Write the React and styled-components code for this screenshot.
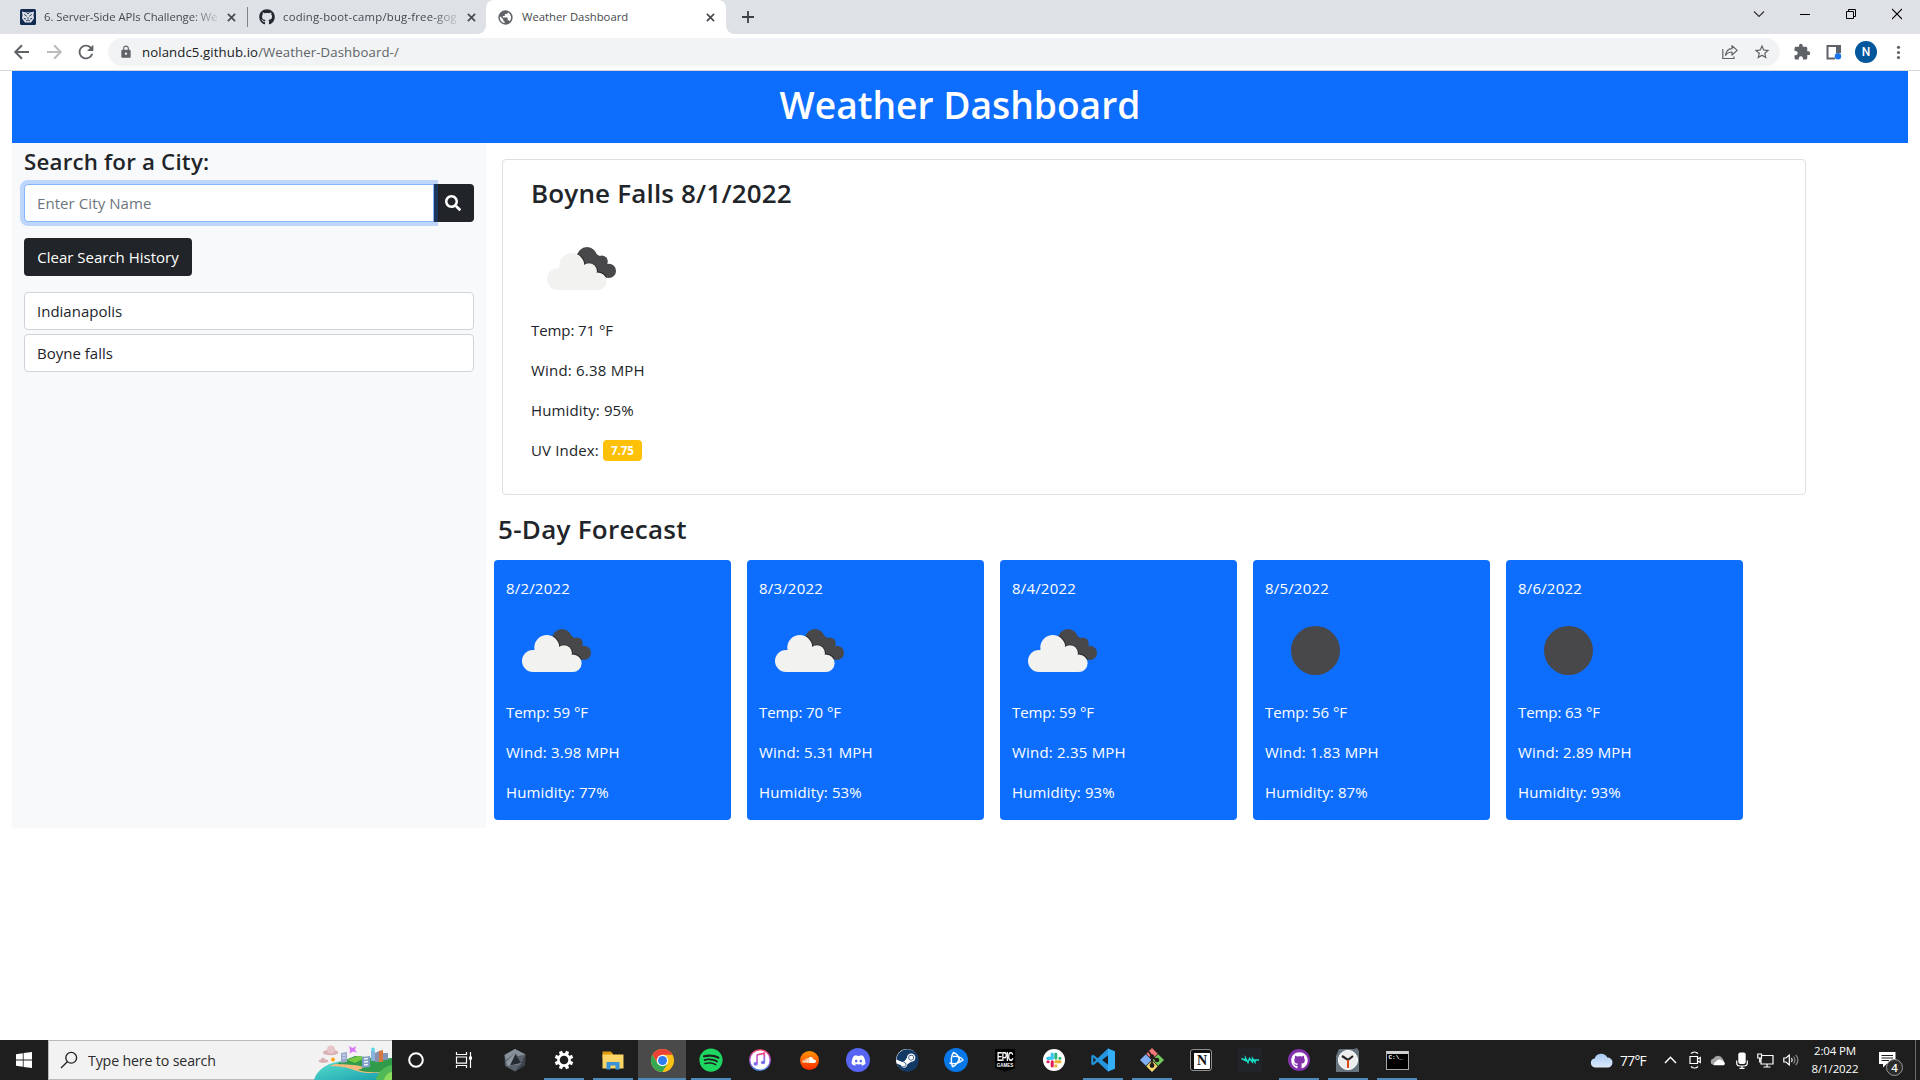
import React from "react";
import styled, { createGlobalStyle, css } from "styled-components";
import { FaSpotify, FaDiscord, FaGithub, FaSearch, FaSoundcloud, FaSteam } from "react-icons/fa";
import { MdExtension, MdLock, MdStarBorder, MdRefresh } from "react-icons/md";

const blue = "#0d6efd";
const dark = "#212529";

const GlobalStyle = createGlobalStyle`
  *, *::before, *::after { box-sizing: border-box; }
  body {
    margin: 0;
    overflow: hidden;
    background: #fff;
    color: ${dark};
    font-family: "Open Sans", "Noto Sans", sans-serif;
    font-size: 15px;
    line-height: 24px;
  }
  svg { display: block; flex: none; }
`;

const Screen = styled.div`
  display: flex;
  flex-direction: column;
  width: 1920px;
  height: 1080px;
`;

/* ---------- browser chrome ---------- */

const TabStrip = styled.div`
  display: flex;
  height: 34px;
  flex: none;
  background: #dee1e6;
`;

const Tab = styled.div`
  display: flex;
  align-items: center;
  position: relative;
  width: ${(p) => p.$width}px;
  padding-left: ${(p) => p.$pad}px;
  padding-right: ${(p) => p.$end}px;
  color: #45494d;
  ${(p) =>
    p.$active &&
    css`
      background: #fff;
      border-radius: 8px 8px 0 0;
      &::before, &::after {
        content: "";
        position: absolute;
        bottom: 0;
        width: 8px;
        height: 8px;
      }
      &::before { left: -8px; background: radial-gradient(circle at 0 0, transparent 7.5px, #fff 8px); }
      &::after { right: -8px; background: radial-gradient(circle at 100% 0, transparent 7.5px, #fff 8px); }
    `}
`;

const TabTitle = styled.span`
  flex: 1;
  margin-left: ${(p) => p.$gap || 8}px;
  margin-right: 7px;
  white-space: nowrap;
  font-size: 11.3px;
  letter-spacing: ${(p) => p.$spacing || 0}px;
  ${(p) => p.$fade && css`mask-image: linear-gradient(to right, #000 84%, transparent 101%);`}
`;

const TabDivider = styled.div`
  width: 1px;
  height: 20px;
  margin-top: 7px;
  background: #808387;
`;

const NewTab = styled.div`
  display: flex;
  align-items: center;
  margin-left: 16px;
`;

const WindowControls = styled.div`
  display: flex;
  margin-left: auto;
`;

const WindowButton = styled.div`
  display: flex;
  justify-content: center;
  width: 46px;
  padding-top: 8px;
`;

const Toolbar = styled.div`
  display: flex;
  align-items: center;
  flex: none;
  height: 37px;
  padding: 0 10px 1px 10px;
  border-bottom: 1px solid #d5d7da;
  color: #5f6368;
`;

const NavButtons = styled.div`
  display: flex;
  align-items: center;
  gap: 8px;
  width: 98px;
  svg:last-child { margin-left: 1px; }
`;

const Omnibox = styled.div`
  display: flex;
  align-items: center;
  width: 1672px;
  height: 28px;
  padding: 0 9px 0 11px;
  border-radius: 14px;
  background: #f1f3f4;
`;

const Url = styled.span`
  flex: 1;
  margin-left: 9px;
  font-size: 13.2px;
  letter-spacing: 0.1px;
  line-height: 28px;
  color: #5f6368;
  b { font-weight: 400; color: #202124; }
`;

const OmniActions = styled.div`
  display: flex;
  gap: 14px;
`;

const Extensions = styled.div`
  display: flex;
  align-items: center;
  gap: 10px;
  margin-left: 13px;
`;

const PuzzleSlot = styled.div`
  width: 20px;
`;

const Avatar = styled.div`
  width: 22px;
  height: 22px;
  border-radius: 50%;
  background: #01579b;
  color: #fff;
  font: 500 12px/22px Roboto, sans-serif;
  text-align: center;
`;

/* ---------- page ---------- */

const Page = styled.main`
  flex: 1;
  padding: 0 12px;
`;

const Banner = styled.header`
  height: 72px;
  background: ${blue};
  color: #fff;
  text-align: center;
  font-size: 37.2px;
  font-weight: 600;
  line-height: 67px;
`;

const Columns = styled.div`
  display: flex;
  height: 685px;
`;

const Sidebar = styled.aside`
  width: 474px;
  padding: 4px 12px 0;
  background: #f8f9fa;
`;

const SearchTitle = styled.h4`
  margin: 0 0 8px;
  font-size: 22.3px;
  font-weight: 600;
  line-height: 29px;
  letter-spacing: 0.2px;
`;

const SearchGroup = styled.div`
  display: flex;
  margin-bottom: 16px;
`;

const CityInput = styled.input`
  position: relative;
  z-index: 1;
  width: 410px;
  height: 38px;
  padding: 0 12px;
  border: 1px solid #86b7fe;
  border-radius: 4px 0 0 4px;
  outline: none;
  box-shadow: 0 0 0 4px rgba(13, 110, 253, 0.25);
  background: #fff;
  font: 15px/24px "Open Sans", "Noto Sans", sans-serif;
  letter-spacing: 0.08px;
  &::placeholder { color: #6c757d; opacity: 1; }
`;

const SearchButton = styled.button`
  display: flex;
  align-items: center;
  justify-content: center;
  width: 41px;
  height: 38px;
  margin-left: -1px;
  padding: 0 2px 0 0;
  border: 0;
  border-radius: 0 4px 4px 0;
  background: ${dark};
  color: #fff;
`;

const ClearButton = styled.button`
  display: block;
  width: 168px;
  height: 38px;
  margin: 0 0 16px;
  padding: 0;
  border: 0;
  border-radius: 4px;
  background: ${dark};
  color: #fff;
  font: 15px/38px "Open Sans", "Noto Sans", sans-serif;
`;

const HistoryList = styled.div`
  display: grid;
  gap: 4px;
`;

const HistoryItem = styled.div`
  height: 38px;
  padding: 6px 12px;
  border: 1px solid #ced4da;
  border-radius: 4px;
  background: #fff;
`;

const Content = styled.section`
  padding: 16px 0 0 8px;
`;

const CurrentCard = styled.article`
  width: 1304px;
  height: 336px;
  margin-left: 8px;
  padding: 16px 28px;
  border: 1px solid #dfdfdf;
  border-radius: 4px;
`;

const CurrentTitle = styled.h3`
  margin: 0 0 8px;
  font-size: 26px;
  font-weight: 600;
  line-height: 34px;
  letter-spacing: 0.17px;
`;

const Reading = styled.p`
  height: 24px;
  margin: 0 0 16px;
  letter-spacing: ${(p) => p.$spacing || 0}px;
`;

const UvBadge = styled.span`
  display: inline-block;
  width: 39px;
  height: 21px;
  border-radius: 4px;
  background: #ffc107;
  color: #fff;
  font-size: 11.5px;
  font-weight: 700;
  line-height: 22px;
  letter-spacing: 0;
  text-align: center;
  vertical-align: 1px;
`;

const ForecastTitle = styled.h3`
  margin: 17px 0 14px 4px;
  font-size: 26px;
  font-weight: 600;
  line-height: 34px;
  letter-spacing: 0.28px;
`;

const ForecastRow = styled.div`
  display: flex;
  gap: 16px;
`;

const DayCard = styled.article`
  width: 237px;
  height: 260px;
  padding: 16px 12px;
  border-radius: 4px;
  background: ${blue};
  color: #fff;
`;

const DayDate = styled.div`
  line-height: 24px;
  letter-spacing: 0.18px;
`;

/* ---------- taskbar ---------- */

const Taskbar = styled.footer`
  display: flex;
  flex: none;
  height: 40px;
  background: #1e1e1e;
  color: #fff;
`;

const StartButton = styled.div`
  display: grid;
  place-items: center;
  width: 48px;
`;

const TaskSearch = styled.div`
  display: flex;
  align-items: center;
  width: 344px;
  padding-left: 11px;
  border: 1px solid #b9b9b9;
  border-right: 0;
  background: #f2f2f2;
  color: #2b2b2b;
  font-size: 14.2px;
  letter-spacing: -0.15px;
  span { flex: 1; margin-left: 10px; padding-top: 1px; }
  svg:last-child { align-self: flex-end; margin-bottom: -1px; }
`;

const TaskApps = styled.div`
  display: flex;
  gap: ${(p) => p.$gap || 0}px;
  margin-left: ${(p) => p.$start || 0}px;
`;

const TaskApp = styled.div`
  display: grid;
  place-items: center;
  width: 48px;
  height: 40px;
  background: ${(p) =>
    p.$open
      ? `linear-gradient(#4e8abb, #4e8abb) bottom / ${p.$active ? 48 : 40}px 2px no-repeat`
      : "none"};
  background-color: ${(p) => (p.$active ? "#4a4a4a" : "transparent")};
`;

const Disc = styled.div`
  display: grid;
  place-items: center;
  width: ${(p) => p.$size}px;
  height: ${(p) => p.$size}px;
  border-radius: 50%;
  background: ${(p) => p.$fill};
  color: #fff;
`;

const EpicBadge = styled.div`
  width: 20px;
  height: 23px;
  padding-top: 2px;
  background: #000;
  clip-path: polygon(0 0, 100% 0, 100% 86%, 50% 100%, 0 86%);
  text-align: center;
  font: 700 10px/11px "Liberation Sans", sans-serif;
  letter-spacing: -0.9px;
  div { transform: scale(0.8, 1.25); }
  small { display: block; font-size: 4.5px; line-height: 5px; letter-spacing: 0; margin-top: 1px; }
`;

const NotionCube = styled.div`
  width: 20px;
  height: 20px;
  border: 2px solid #111;
  border-width: 3px 1px 1px 3px;
  border-radius: 2px;
  outline: 1px solid #8f8f8f;
  background: #fff;
  color: #111;
  font: 700 14px/16px "Liberation Serif", serif;
  text-align: center;
`;

const Console = styled.div`
  width: 23px;
  height: 19px;
  border: 1px solid #aaa;
  border-top: 3px solid #d0d0d0;
  background: #000;
  font: 700 6px/7px "Liberation Mono", monospace;
  padding-left: 2px;
`;

const Tray = styled.div`
  display: flex;
  align-items: center;
  margin-left: auto;
`;

const Temperature = styled.span`
  width: 44px;
  margin-left: 7px;
  font-size: 13.8px;
  letter-spacing: -0.7px;
  padding-top: 1px;
`;

const TrayIcons = styled.div`
  display: flex;
  align-items: center;
  justify-content: space-between;
  width: 136px;
  svg:first-child { margin-right: 3px; }
`;

const Clock = styled.div`
  width: 62px;
  margin-left: 4px;
  text-align: center;
  font-size: 11.5px;
  line-height: 18px;
  letter-spacing: -0.12px;
  padding-bottom: 1px;
`;

const Notices = styled.div`
  position: relative;
  margin-left: 13px;
  width: 36px;
  height: 40px;
  padding-top: 12px;
`;

const NoticeCount = styled.span`
  position: absolute;
  left: 7px;
  top: 19px;
  width: 17px;
  height: 17px;
  border: 1px solid #9a9a9a;
  border-radius: 50%;
  background: #2c2c2c;
  text-align: center;
  font-size: 11.5px;
  font-weight: 600;
  line-height: 15px;
`;

const ShowDesktop = styled.div`
  width: 5px;
  height: 40px;
  border-left: 1px solid #6b6b6b;
`;

/* ---------- drawings ---------- */

const Cross = ({ size = 9, color = "#45494d", width = 1.8 }) => (
  <svg width={size} height={size} viewBox="0 0 10 10">
    <path d="M1 1L9 9M9 1L1 9" stroke={color} strokeWidth={width} />
  </svg>
);

const BrokenClouds = () => (
  <svg width="100" height="100" viewBox="0 0 100 100">
    <g fill="#48484a">
      <circle cx="56" cy="39" r="10" />
      <circle cx="70.8" cy="43.5" r="6" />
      <circle cx="77.8" cy="52.9" r="7.2" />
      <path d="M48 45L62 34L72 40L80 58L66 60Z" />
    </g>
    <mask id="front">
      <rect width="100" height="100" fill="#000" />
      <g fill="#fff">
        <circle cx="27" cy="61" r="12" />
        <circle cx="40.8" cy="47.5" r="13.4" />
        <circle cx="58" cy="53.2" r="8.8" />
        <circle cx="66.8" cy="63.2" r="9.8" />
      </g>
    </mask>
    <g mask="url(#front)" fill="#242426">
      <circle cx="56" cy="39" r="10" />
      <circle cx="70.8" cy="43.5" r="6" />
      <circle cx="77.8" cy="52.9" r="7.2" />
      <path d="M48 45L62 34L72 40L80 58L66 60Z" />
    </g>
    <g fill="#f2f2f1">
      <circle cx="27" cy="61" r="11" />
      <circle cx="40.8" cy="47.5" r="12.5" />
      <circle cx="58" cy="53.2" r="7.9" />
      <circle cx="66.8" cy="63.2" r="8.8" />
      <path d="M27 50H58L66 58V72H27Z" />
    </g>
  </svg>
);

const ClearNight = () => (
  <svg width="100" height="100" viewBox="0 0 100 100">
    <circle cx="50.5" cy="50.5" r="24.5" fill="#48484a" />
  </svg>
);

const BearIcon = () => (
  <svg width="16" height="16" viewBox="0 0 16 16">
    <rect width="16" height="16" rx="1.5" fill="#132a50" />
    <path d="M2 2.5L5 3.2H11L14 2.5L13.5 6L14 9.5L11 13.5H5L2 9.5L2.5 6Z" fill="#d9dee6" />
    <path d="M4.2 5.4L6.8 7.2M11.8 5.4L9.2 7.2M3.8 9.4L6 10M12.2 9.4L10 10M6 12L8 10.8L10 12M6.5 3.5L8 5L9.5 3.5" stroke="#132a50" strokeWidth="0.9" fill="none" />
    <path d="M7 8.5H9L8 10Z" fill="#132a50" />
  </svg>
);

const Globe = () => (
  <svg width="15" height="15" viewBox="0 0 24 24">
    <path
      fill="#5f6368"
      d="M12 .5a11.5 11.5 0 1 0 0 23 11.5 11.5 0 0 0 0-23zM3 12c0-.7.1-1.400.25-2.050L8.500 15v1.200c0 1.200 1 2.200 2.200 2.200v2.500C6.350 20.300 3 16.600 3 12zm15.700 5.900c-.3-.9-1.150-1.550-2.150-1.550h-1.100v-3.350c0-.6-.5-1.100-1.100-1.100H7.700V9.700h2.200c.6 0 1.100-.5 1.100-1.100V6.400h2.250c1.200 0 2.200-1 2.200-2.200v-.5A9 9 0 0 1 18.700 17.900z"
    />
  </svg>
);

const Arrow = ({ color, flip }) => (
  <svg width="24" height="24" viewBox="0 0 24 24">
    <path
      d={flip ? "M5 12H18.3M12 5.3L18.7 12L12 18.7" : "M19 12H5.7M12 5.3L5.3 12L12 18.7"}
      fill="none"
      stroke={color}
      strokeWidth="2"
    />
  </svg>
);

const Share = () => (
  <svg width="18" height="18" viewBox="0 0 18 18" fill="none" stroke="#5f6368" strokeWidth="1.2">
    <path d="M1.8 6V15.5H13V13.5" />
    <path d="M4.5 12.3C5 8.2 7.5 5.9 11 5.7V2.7L16.2 7.4L11 12V9C8 9 6 10 4.5 12.3Z" strokeLinejoin="round" />
  </svg>
);

const SidePanel = () => (
  <svg width="22" height="22" viewBox="0 0 22 22">
    <path d="M4 4.4H17.5V17.5H4Z" fill="#fff" />
    <path d="M3.5 4H18V12H13V6H5.5V16.5H12V18.5H3.5Z" fill="#5f6368" />
    <circle cx="15" cy="15.2" r="3.2" fill="#1a73e8" />
  </svg>
);

const Dots = () => (
  <svg width="22" height="22" viewBox="0 0 22 22" fill="#5f6368">
    <circle cx="11.5" cy="6.3" r="1.6" />
    <circle cx="11.5" cy="11.5" r="1.6" />
    <circle cx="11.5" cy="16.5" r="1.6" />
  </svg>
);

const WindowsLogo = () => (
  <svg width="16" height="16" viewBox="0 0 16 16" fill="#fff">
    <path d="M0 2.2L6.8 1.2V7.6H0ZM7.6 1.1L16 0V7.6H7.6ZM0 8.4H6.8V14.8L0 13.8ZM7.6 8.4H16V16L7.6 14.9Z" />
  </svg>
);

const Lens = () => (
  <svg width="18" height="18" viewBox="0 0 18 18" fill="none" stroke="#222" strokeWidth="1.3">
    <circle cx="11.2" cy="6.8" r="5.4" />
    <path d="M7.3 10.7L1 17" />
  </svg>
);

const Island = () => (
  <svg width="79" height="35" viewBox="0 0 79 35">
    <defs>
      <linearGradient id="sea" x1="0" y1="0" x2="1" y2="1">
        <stop offset="0" stopColor="#5be0cf" />
        <stop offset="1" stopColor="#159dab" />
      </linearGradient>
    </defs>
    <path d="M1 35C4 24 16 16 34 16L79 18V35Z" fill="url(#sea)" />
    <path d="M17 21C24 17 34 19 46 16L66 14L79 20V27L58 28C40 28 44 22 17 21Z" fill="#f2bb7c" />
    <path d="M24 19C31 15 38 13 42 11C52 11 58 14 66 14L79 13V25C68 28 54 28 45 25C58 21 44 20 24 19Z" fill="#2f9b4b" />
    <path d="M34 15L45 11L52 13L42 18Z" fill="#77c943" />
    <path d="M63 35C64 27 72 21 79 20V35Z" fill="#52b957" />
    <path d="M71 35C72 30 76 27 79 27V35Z" fill="#8bdc5b" />
    <g fill="#d9b1b5">
      <ellipse cx="17.5" cy="7.500" rx="7.8" ry="2.800" />
      <circle cx="18" cy="4.5" r="4" fill="#e8c5c8" />
      <ellipse cx="10.5" cy="16" rx="4.8" ry="1.800" />
      <circle cx="10" cy="14.800" r="2" />
    </g>
    <circle cx="20" cy="14.500" r="2" fill="#ffa510" />
    <path d="M28 8L34 7V17L28 18Z" fill="#9aa8cc" />
    <path d="M29.5 10H32.5M29.5 13H32.5" stroke="#e4e9fa" />
    <path d="M36 1L39.5 3L43 1L42 4.8L44 7.5L40 6.5L36.5 8.5L37 5Z" fill="#d97af5" />
    <path d="M58 6H62V16H58Z" fill="#86b4dc" />
    <circle cx="60" cy="4.500" r="2" fill="#5fd8ea" />
    <path d="M62 8L66 6V17H62Z" fill="#8b8fae" />
    <path d="M66 6L70 5V17H66Z" fill="#d5773f" />
    <path d="M70 8H75V15H70Z" fill="#8294b8" />
    <path d="M49 12L57 11V22L49 23Z" fill="#7f9cc3" />
    <path d="M51 14L55 13.5M51 17L55 16.5M51 20L55 19.5" stroke="#eef3ff" strokeWidth="1.3" />
  </svg>
);

const TaskView = () => (
  <svg width="18" height="18" viewBox="0 0 18 18" fill="none" stroke="#fff" strokeWidth="1.2">
    <path d="M1.5 1V3.5H11.5V1M1.5 17V14.5H11.5V17M1.5 6H11.5V12.2H1.5ZM15.5 1V17" />
    <path d="M14 5.5H17V8.5H14Z" fill="#fff" stroke="none" />
  </svg>
);

const Gem = () => (
  <svg width="22" height="23" viewBox="0 0 22 23">
    <path d="M11 0L21.5 5.5L21 16L11 22.5L1 17L0.5 6Z" fill="#59616b" />
    <path d="M11 0L21.5 5.5L14 7L11 4L2 11L0.5 6Z" fill="#87909a" />
    <path d="M11 4L17 15L3.5 17L2 13Z" fill="#8d969f" />
    <path d="M11.5 5L17 14L6 16.5Z" fill="#252b32" />
    <path d="M21 6L17 15L11 22.5L21 16Z" fill="#3d444c" />
  </svg>
);

const Gear = () => (
  <svg width="20" height="20" viewBox="-10 -10 20 20">
    {[0, 45, 90, 135, 180, 225, 270, 315].map((a) => (
      <rect key={a} x="-1.7" y="-9.3" width="3.4" height="4" fill="#fff" transform={`rotate(${a + 22.5})`} />
    ))}
    <circle r="5.6" fill="none" stroke="#fff" strokeWidth="2.6" />
  </svg>
);

const Folder = () => (
  <svg width="22" height="19" viewBox="0 0 22 19">
    <path d="M0.5 0.5H9L11 3V7H0.5Z" fill="#dc9a10" />
    <path d="M0.5 3.5H21.5V17.5H0.5Z" fill="#fbd667" />
    <path d="M4.5 18.5V11H17.5V18.5H13.5V14.5H8.5V18.5Z" fill="#3a93d8" />
  </svg>
);

const Chrome = () => (
  <svg width="23" height="23" viewBox="0 0 48 48">
    <circle cx="24" cy="24" r="24" fill="#fbc116" />
    <path d="M24 12H44.8A24 24 0 0 0 3.2 12L13.6 30Z" fill="#ea4335" />
    <path d="M3.2 12L13.6 30L34.4 30L24 48A24 24 0 0 1 3.2 12Z" fill="#34a853" />
    <circle cx="24" cy="24" r="12" fill="#fff" />
    <circle cx="24" cy="24" r="9.3" fill="#2f7cf0" />
  </svg>
);

const Music = () => (
  <svg width="22" height="22" viewBox="0 0 22 22">
    <defs>
      <linearGradient id="note" x1="0" y1="0" x2="0" y2="1">
        <stop offset="0" stopColor="#fa4678" />
        <stop offset="0.5" stopColor="#b05ae0" />
        <stop offset="1" stopColor="#4a8df5" />
      </linearGradient>
    </defs>
    <circle cx="11" cy="11" r="10.2" fill="#fff" stroke="url(#note)" strokeWidth="1.3" />
    <path d="M8 5.8L15.3 4.3V13.2" fill="none" stroke="url(#note)" strokeWidth="1.8" />
    <path d="M8 5.5V14.7" stroke="#c457c8" strokeWidth="1.6" />
    <ellipse cx="6.7" cy="14.9" rx="2.1" ry="1.8" fill="#7c6cf0" />
    <ellipse cx="14" cy="13.5" rx="2.1" ry="1.8" fill="#7c6cf0" />
  </svg>
);

const BattleMark = () => (
  <svg width="18" height="18" viewBox="0 0 18 18" fill="none" stroke="#fff" strokeWidth="1.4" strokeLinejoin="round">
    <path d="M5.500 16C4 11 4 5 6.500 1.500C9.500 2.500 12 6 13 10.500" />
    <path d="M2.500 12C6 13.500 12 12.500 16 9C14.500 6.500 10 5 5.500 5.500" />
    <path d="M5.500 16C8.500 14.500 11.500 11 13 6" />
  </svg>
);

const Slack = () => (
  <svg width="16" height="16" viewBox="0 0 16 16" strokeWidth="3.1" strokeLinecap="round">
    <path d="M6.2 2V6M2 6.2H3" stroke="#36c5f0" />
    <path d="M6 6.2H2" stroke="#36c5f0" />
    <path d="M9.8 2V6.1M13.8 6.2H14" stroke="#2eb67d" />
    <path d="M9.8 9.8H14M9.8 13.9V14" stroke="#ecb22e" />
    <path d="M6.2 9.9V14M2 9.8H2.1" stroke="#e01e5a" />
  </svg>
);

const VsCode = () => (
  <svg width="24" height="24" viewBox="0 0 24 24">
    <path d="M17 0.4L24 3.5V20.5L17 23.6L6.7 13.8L2.3 17.2L0.3 16.2V7.8L2.3 6.8L6.7 10.2ZM17.8 6.8L11 12L17.8 17.2ZM2.3 9.3V14.7L5 12Z" fill="#2597e0" fillRule="evenodd" />
    <path d="M17 0.4L24 3.5V20.5L17 23.6Z" fill="#35aef5" />
  </svg>
);

const GitLogo = () => (
  <svg width="24" height="24" viewBox="0 0 24 24">
    <path d="M12 0L17.7 5.7L12 11.4L6.3 5.7Z" fill="#f07878" />
    <path d="M18.2 6.2L24 12L18.2 17.8L12.5 12Z" fill="#73c95b" />
    <path d="M5.8 6.2L11.5 12L5.8 17.8L0 12Z" fill="#80aff5" />
    <path d="M12 12.6L17.7 18.3L12 24L6.3 18.3Z" fill="#f8d96d" />
    <path d="M8.5 3.5L12 8V18M12 9L16.5 12" fill="none" stroke="#241b1b" strokeWidth="1.7" />
    <g fill="#241b1b">
      <circle cx="12" cy="8.5" r="2.2" />
      <circle cx="12" cy="17.5" r="2.4" />
      <circle cx="17" cy="12" r="2.3" />
    </g>
  </svg>
);

const Waves = () => (
  <svg width="24" height="24" viewBox="0 0 24 24">
    <rect width="24" height="24" fill="#202328" />
    <path d="M3.5 10.5L7.5 12.5V10L10 14.5L11.5 10.5L14.5 14V10.5L17 14V12H21" fill="none" stroke="#17e2cd" strokeWidth="1.5" />
  </svg>
);

const AlarmClock = () => (
  <svg width="24" height="24" viewBox="0 0 24 24">
    <path d="M3 1H18L21 0L23 3V24H0V8Z" fill="#67737d" />
    <circle cx="12" cy="12" r="9.6" fill="#ededed" stroke="#fff" />
    <path d="M6 8L12 12L17 8" fill="none" stroke="#242424" strokeWidth="2.2" />
    <path d="M12 12V20" stroke="#dd4a18" strokeWidth="2" />
  </svg>
);

const WeatherCloud = () => (
  <svg width="23" height="16" viewBox="0 0 23 16">
    <defs>
      <linearGradient id="sky" x1="0" y1="0" x2="0" y2="1">
        <stop offset="0" stopColor="#a8c9f2" />
        <stop offset="1" stopColor="#dce9fa" />
      </linearGradient>
    </defs>
    <path d="M5 15.5A4.6 4.6 0 0 1 4.6 6.4A7 7 0 0 1 17.3 5.5A5 5 0 0 1 17.7 15.5Z" fill="url(#sky)" />
  </svg>
);

const line = { fill: "none", stroke: "#fff", strokeWidth: 1.2 };

const trayDrawings = [
  <svg key="up" width="13" height="8" viewBox="0 0 13 8"><path d="M1 7L6.5 1.3L12 7" {...line} strokeWidth="1.5" /></svg>,
  <svg key="meet" width="12" height="18" viewBox="0 0 12 18"><path d="M1 5.5H8.5V12.5H1ZM8.5 8L11.3 6.5V11.5L8.5 10M2 2.5C4 0.5 7 0.5 9 2.5M2 15.5C4 17.5 7 17.5 9 15.5" {...line} /></svg>,
  <svg key="drive" width="17" height="12" viewBox="0 0 17 12"><path d="M3.5 11A3.3 3.3 0 0 1 3.5 4.5A5 5 0 0 1 12.5 4.5L14 7L7 9Z" fill="#a3a3a3" /><path d="M4 11.2A2.8 2.8 0 0 1 5.7 7.8A4.4 4.4 0 0 1 13 7A2.5 2.5 0 0 1 14 11.2Z" fill="#fff" /></svg>,
  <svg key="mic" width="12" height="17" viewBox="0 0 12 17"><rect x="2.3" y="0.5" width="7.4" height="11.5" rx="2" fill="#fff" /><path d="M0.7 8.5V11C0.7 13 2 14 4 14H8C10 14 11.3 13 11.3 11V8.5M6 14V16.3M3.5 16.3H8.5" {...line} /></svg>,
  <svg key="net" width="17" height="15" viewBox="0 0 17 15"><path d="M5 2.5H16V11H4V5.5M10 11V14M6.5 14H13.5M0.8 1H4.5V5H0.8ZM2.7 5V9.5" {...line} /></svg>,
  <svg key="vol" width="17" height="14" viewBox="0 0 17 14"><path d="M0.8 5H3L6.3 2V12L3 9H0.8Z" {...line} /><path d="M8.5 5Q10 7 8.5 9" {...line} /><path d="M10.5 3.5Q13.3 7 10.5 10.5M12.8 1.8Q17 7 12.8 12.2" {...line} stroke="#8b8b8b" /></svg>,
];

const days = [
  { date: "8/2/2022", icon: "clouds", temp: "59", wind: "3.98", humidity: "77" },
  { date: "8/3/2022", icon: "clouds", temp: "70", wind: "5.31", humidity: "53" },
  { date: "8/4/2022", icon: "clouds", temp: "59", wind: "2.35", humidity: "93" },
  { date: "8/5/2022", icon: "clear", temp: "56", wind: "1.83", humidity: "87" },
  { date: "8/6/2022", icon: "clear", temp: "63", wind: "2.89", humidity: "93" },
];

const apps = [
  { id: "gem", icon: <Gem /> },
  { id: "settings", icon: <Gear />, open: true },
  { id: "files", icon: <Folder />, open: true },
  { id: "chrome", icon: <Chrome />, open: true, active: true },
  { id: "spotify", icon: <FaSpotify size={24} color="#1ed760" />, open: true },
  { id: "music", icon: <Music /> },
  { id: "soundcloud", icon: <Disc $size={19} $fill="linear-gradient(#ff9500, #ff2a00)"><FaSoundcloud size={14} /></Disc> },
  { id: "discord", icon: <Disc $size={24} $fill="#5865f2"><FaDiscord size={15} /></Disc> },
  { id: "steam", icon: <Disc $size={22} $fill="#fff"><FaSteam size={23} color="#123a67" /></Disc> },
  { id: "battle", icon: <Disc $size={24} $fill="#0878e8"><BattleMark /></Disc> },
  { id: "epic", icon: <EpicBadge><div>EPIC</div><small>GAMES</small></EpicBadge> },
  { id: "slack", icon: <Disc $size={22} $fill="#fff"><Slack /></Disc> },
  { id: "code", icon: <VsCode />, open: true },
  { id: "git", icon: <GitLogo />, open: true },
  { id: "notion", icon: <NotionCube>N</NotionCube> },
  { id: "waves", icon: <Waves /> },
  { id: "github", icon: <Disc $size={22} $fill="#8331ab"><FaGithub size={17} /></Disc>, open: true },
  { id: "alarm", icon: <AlarmClock />, open: true },
  { id: "console", icon: <Console>C:\_</Console>, open: true },
];

function Browser() {
  return (
    <>
      <TabStrip>
        <Tab $width={247} $pad={20} $end={11}>
          <BearIcon />
          <TabTitle $fade $spacing={-0.04}>6. Server-Side APIs Challenge: We</TabTitle>
          <Cross />
        </Tab>
        <TabDivider />
        <Tab $width={238} $pad={11} $end={10}>
          <FaGithub size={16} color="#24292f" />
          <TabTitle $fade $spacing={0.22}>coding-boot-camp/bug-free-gog</TabTitle>
          <Cross />
        </Tab>
        <Tab $width={240} $pad={12} $end={11} $active>
          <Globe />
          <TabTitle $gap={9}>Weather Dashboard</TabTitle>
          <Cross />
        </Tab>
        <NewTab>
          <svg width="12" height="12" viewBox="0 0 12 12"><path d="M6 0V12M0 6H12" stroke="#3c4043" strokeWidth="1.8" /></svg>
        </NewTab>
        <WindowControls>
          <WindowButton>
            <svg width="12" height="12" viewBox="0 0 12 12"><path d="M1 3.5L6 8.5L11 3.5" fill="none" stroke="#333" strokeWidth="1.2" /></svg>
          </WindowButton>
          <WindowButton>
            <svg width="10" height="12" viewBox="0 0 10 12"><path d="M0 6.5H10" stroke="#000" /></svg>
          </WindowButton>
          <WindowButton>
            <svg width="10" height="12" viewBox="0 0 10 12"><path d="M0.5 3.5H7.5V10.5H0.5ZM2.5 3.5V1.5H9.5V8.5H7.5" fill="none" stroke="#000" /></svg>
          </WindowButton>
          <WindowButton>
            <svg width="10" height="12" viewBox="0 0 10 12"><path d="M0 1L10 11M10 1L0 11" stroke="#000" strokeWidth="1.1" /></svg>
          </WindowButton>
        </WindowControls>
      </TabStrip>
      <Toolbar>
        <NavButtons>
          <Arrow color="#5f6368" />
          <Arrow color="#babcbe" flip />
          <MdRefresh size={22} />
        </NavButtons>
        <Omnibox>
          <MdLock size={14} />
          <Url><b>nolandc5.github.io</b>/Weather-Dashboard-/</Url>
          <OmniActions>
            <Share />
            <MdStarBorder size={18} />
          </OmniActions>
        </Omnibox>
        <Extensions>
          <PuzzleSlot><MdExtension size={18} /></PuzzleSlot>
          <SidePanel />
          <Avatar>N</Avatar>
          <Dots />
        </Extensions>
      </Toolbar>
    </>
  );
}

function Readings({ temp, wind, humidity }) {
  return (
    <>
      <Reading $spacing={-0.08}>Temp: {temp} °F</Reading>
      <Reading $spacing={0.2}>Wind: {wind} MPH</Reading>
      <Reading $spacing={0.13}>Humidity: {humidity}%</Reading>
    </>
  );
}

function Dashboard() {
  return (
    <Page>
      <Banner>Weather Dashboard</Banner>
      <Columns>
        <Sidebar>
          <SearchTitle>Search for a City:</SearchTitle>
          <SearchGroup>
            <CityInput placeholder="Enter City Name" />
            <SearchButton><FaSearch size={16} /></SearchButton>
          </SearchGroup>
          <ClearButton>Clear Search History</ClearButton>
          <HistoryList>
            <HistoryItem>Indianapolis</HistoryItem>
            <HistoryItem>Boyne falls</HistoryItem>
          </HistoryList>
        </Sidebar>
        <Content>
          <CurrentCard>
            <CurrentTitle>Boyne Falls 8/1/2022</CurrentTitle>
            <BrokenClouds />
            <Readings temp="71" wind="6.38" humidity="95" />
            <Reading $spacing={0.15}>UV Index: <UvBadge>7.75</UvBadge></Reading>
          </CurrentCard>
          <ForecastTitle>5-Day Forecast</ForecastTitle>
          <ForecastRow>
            {days.map((d) => (
              <DayCard key={d.date}>
                <DayDate>{d.date}</DayDate>
                {d.icon === "clouds" ? <BrokenClouds /> : <ClearNight />}
                <Readings temp={d.temp} wind={d.wind} humidity={d.humidity} />
              </DayCard>
            ))}
          </ForecastRow>
        </Content>
      </Columns>
    </Page>
  );
}

function WindowsTaskbar() {
  return (
    <Taskbar>
      <StartButton><WindowsLogo /></StartButton>
      <TaskSearch>
        <Lens />
        <span>Type here to search</span>
        <Island />
      </TaskSearch>
      <TaskApps>
        <TaskApp>
          <svg width="16" height="16" viewBox="0 0 16 16"><circle cx="8" cy="8" r="6.8" fill="none" stroke="#fff" strokeWidth="2" /></svg>
        </TaskApp>
        <TaskApp><TaskView /></TaskApp>
      </TaskApps>
      <TaskApps $gap={1} $start={3}>
        {apps.map((a) => (
          <TaskApp key={a.id} $open={a.open} $active={a.active}>{a.icon}</TaskApp>
        ))}
      </TaskApps>
      <Tray>
        <WeatherCloud />
        <Temperature>77°F</Temperature>
        <TrayIcons>{trayDrawings}</TrayIcons>
        <Clock>2:04 PM<br />8/1/2022</Clock>
        <Notices>
          <svg width="17" height="16" viewBox="0 0 17 16"><path d="M0 0H16.5V12H7.5L4 15.5V12H0Z" fill="#fff" /><path d="M2.5 3.5H14M2.5 6H14M2.5 8.5H10" stroke="#1e1e1e" /></svg>
          <NoticeCount>4</NoticeCount>
        </Notices>
        <ShowDesktop />
      </Tray>
    </Taskbar>
  );
}

export default function App() {
  return (
    <Screen>
      <GlobalStyle />
      <Browser />
      <Dashboard />
      <WindowsTaskbar />
    </Screen>
  );
}
